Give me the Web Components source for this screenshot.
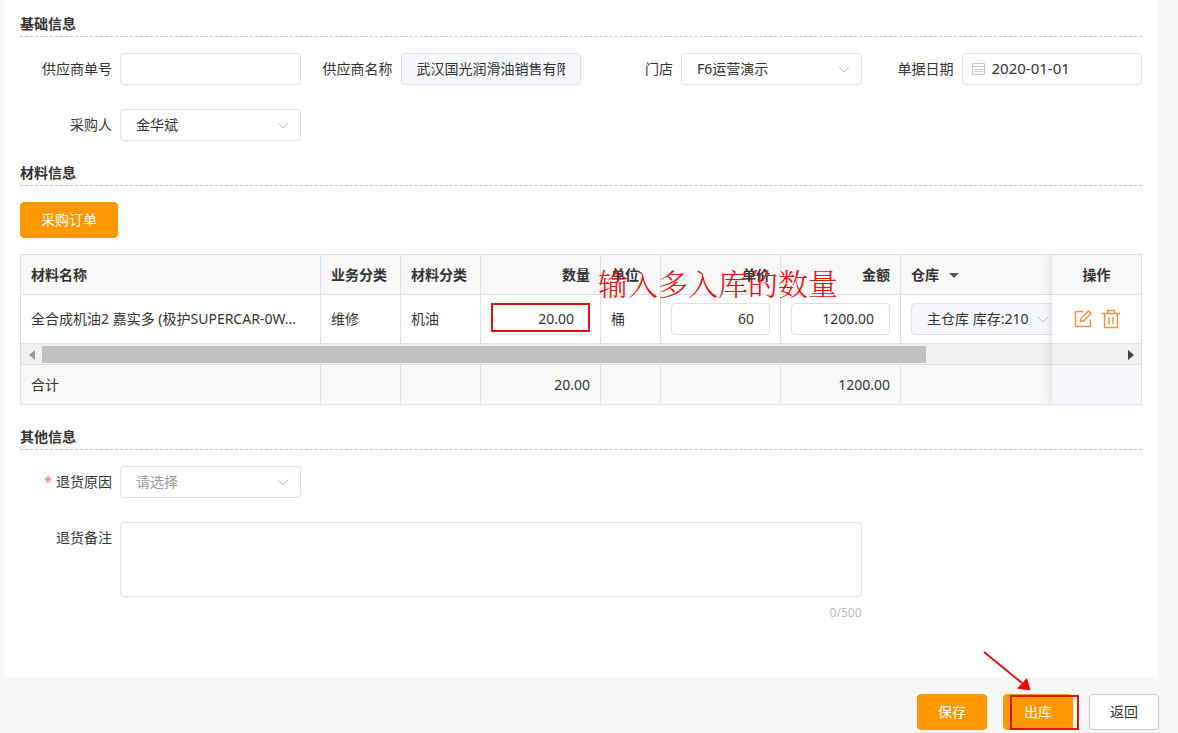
<!DOCTYPE html>
<html lang="zh-CN">
<head>
<meta charset="utf-8">
<meta name="viewport" content="width=device-width, initial-scale=1">
<title>采购退货单</title>
<style>
  body {
    margin: 0;
    background: #f7f7f7;
    color: #333;
    font: 14px/20px "Noto Sans", "Noto Sans CJK SC", sans-serif;
  }
</style>
</head>
<body>
<return-order-page></return-order-page>

<script>
const define = (name, html, setup) => {
  const template = document.createElement('template');
  template.innerHTML = html;
  customElements.define(name, class extends HTMLElement {
    constructor() {
      super();
      this.attachShadow({ mode: 'open' }).append(template.content.cloneNode(true));
    }
    connectedCallback() {
      if (setup && !this.ready) { this.ready = true; setup(this, this.shadowRoot); }
    }
  });
};

/* Bordered control: text box, drop-down, date box or text area, with an optional label. */
define('order-field', `
<style>
  :host { display: flex; align-items: flex-start; min-width: 0; }
  label { flex: none; box-sizing: border-box; width: 100px; padding-right: 8px; line-height: 32px; text-align: right; }
  label:empty { display: none; }
  :host([required]) label::before { content: "*"; color: #f56c6c; margin-right: 4px; }
  .box { position: relative; flex: 1; min-width: 0; }
  input, select, textarea {
    display: block; box-sizing: border-box; width: 100%; height: 32px; margin: 0; padding: 0 15px;
    border: 1px solid #dcdfe6; border-radius: 4px; background: #fff; color: #333;
    font: inherit; outline: none; appearance: none; resize: none;
  }
  input { padding-bottom: 2px; }
  input:disabled, select:disabled { background: #f5f7fa; opacity: 1; }
  select.empty { color: #999; }
  textarea { height: 75px; padding: 5px 15px; }
  :host([align=right]) input { text-align: right; }
  :host([kind=date]) input { padding-left: 29px; font-size: 15px; }
  svg { position: absolute; pointer-events: none; fill: none; stroke: #c0c4cc; }
  .chevron { right: 12px; top: 13px; }
  .calendar { left: 10px; top: 9px; }
  .count { display: block; margin-top: 6px; text-align: right; color: #bbb; font-size: 12px; line-height: 20px; }
</style>
<label for="control"></label><div class="box"></div>`, (host, root) => {
  const label = host.getAttribute('label');
  const kind = host.getAttribute('kind') || 'text';
  const value = host.getAttribute('value') || '';
  const box = root.querySelector('.box');
  root.querySelector('label').textContent = label || '';
  const control = document.createElement(kind === 'select' ? 'select' : kind === 'area' ? 'textarea' : 'input');
  control.id = 'control';
  if (!label) control.setAttribute('aria-label', host.getAttribute('name') || '');
  control.disabled = host.hasAttribute('disabled');
  control.required = host.hasAttribute('required');
  box.append(control);
  if (kind === 'select') {
    control.add(new Option(value || host.getAttribute('placeholder'), value));
    control.classList.toggle('empty', !value);
    box.insertAdjacentHTML('beforeend', '<svg class="chevron" width="12" height="7" viewBox="0 0 12 7"><path d="M.8.8 6 6 11.2.8"/></svg>');
  } else {
    control.value = value;
  }
  if (kind === 'date') {
    box.insertAdjacentHTML('beforeend', '<svg class="calendar" width="14" height="14" viewBox="0 0 14 14"><path d="M.5 1.500h12v11h-12zM.5 4.500h12M3 7.500h7M3 9.500h7"/></svg>');
  }
  if (kind === 'area') {
    control.maxLength = 500;
    const count = document.createElement('span');
    count.className = 'count';
    const update = () => { count.textContent = control.value.length + '/500'; };
    control.addEventListener('input', update);
    update();
    box.append(count);
  }
});

define('order-button', `
<style>
  :host { display: inline-block; }
  button {
    display: block; box-sizing: border-box; height: 36px; padding: 0 20px; border: 1px solid #ff9800;
    border-radius: 4px; background: #ff9800; color: #fff; font: inherit; cursor: pointer;
  }
  :host([plain]) button { background: #fff; border-color: #ccc; color: #333; }
</style>
<button type="button"><slot></slot></button>`);

define('order-section', `
<style>
  :host { display: block; }
  h2 { margin: 0 0 16px; padding-bottom: 2px; border-bottom: 1px dashed #c4c4c4; font-size: 14px; line-height: 20px; font-weight: 700; }
</style>
<h2></h2><slot></slot>`, (host, root) => {
  root.querySelector('h2').textContent = host.getAttribute('heading');
});

define('order-form', `
<style>
  :host { display: grid; grid-template-columns: repeat(4, minmax(0, 1fr)); row-gap: 24px; }
  ::slotted([wide]) { grid-column: 1 / span 3; }
</style>
<slot></slot>`);

/* Red hand-drawn frame that lies over whatever is slotted in. */
define('mark-frame', `
<style>
  :host { display: block; position: relative; }
  .frame { position: absolute; inset: var(--frame-inset, 0); border: 2px solid #dc1414; pointer-events: none; }
  svg { position: absolute; left: -20px; top: -43px; pointer-events: none; display: none; }
  :host([arrow]) svg { display: block; }
</style>
<slot></slot><div class="frame"></div>
<svg width="48" height="40" viewBox="0 0 48 40"><path d="M1 1 39 32" stroke="#dc1414" stroke-width="2"/><path d="m47.500 39.500-13.500-2 10-10.500z" fill="#f00000"/></svg>`);

define('material-table', `
<style>
  :host { display: block; position: relative; overflow: hidden; }
  :host::after {
    content: ""; position: absolute; top: 0; right: 0; bottom: 0; width: 90px;
    box-shadow: 0 0 10px rgba(0, 0, 0, .14); clip-path: inset(0 0 0 -10px); pointer-events: none;
  }
  table { width: 100%; table-layout: fixed; border-collapse: separate; border-spacing: 0; border: solid #dcdfe6; border-width: 1px 0 0 1px; }
  th, td { box-sizing: border-box; height: 40px; padding: 0 10px; border: solid #dcdfe6; border-width: 0 1px 1px 0; text-align: left; white-space: nowrap; }
  th, tfoot td { background: #f8f8f9; }
  tbody td { height: 49px; background: #fff; }
  .num { text-align: right; }
  .stock { overflow: hidden; border-right-width: 0; }
  .stock order-field { width: 150px; }
  .ops { text-align: center; }
  tfoot .ops { background: #f5f7fa; }
  .note-cell { position: relative; }
  .note { position: absolute; left: -3px; top: 12px; z-index: 2; color: #dc1414; font-size: 30px; line-height: 30px; font-weight: 300; font-family: "Noto Serif CJK SC", "Noto Sans CJK SC", serif; pointer-events: none; }
  mark-frame { --frame-inset: 0 0 3px 0; }
  .caret { display: inline-block; margin-left: 6px; border: 5px solid transparent; border-top-color: #555; border-bottom: 0; vertical-align: middle; }
  .actions { display: flex; justify-content: center; gap: 8px; }
  .actions button { padding: 0; border: 0; background: none; cursor: pointer; }
  .actions svg { display: block; fill: none; stroke: #ee9149; stroke-width: 1.5; }
  tr.scroll td { height: 21px; padding: 0; background: #f0f0f0; vertical-align: top; }
  .bar { display: flex; height: 17px; margin-top: 2px; }
  .bar button { flex: none; width: 21px; padding: 0; border: 0; background: none; display: flex; align-items: center; justify-content: center; }
  .track { flex: 1; }
  .thumb { width: 82%; height: 100%; background: #c1c1c1; }
</style>
<table>
  <colgroup>
    <col style="width:300px"><col style="width:80px"><col style="width:80px"><col style="width:120px"><col style="width:60px"><col style="width:120px"><col style="width:120px"><col><col style="width:90px">
  </colgroup>
  <thead>
    <tr>
      <th>材料名称</th><th>业务分类</th><th>材料分类</th><th class="num">数量</th>
      <th class="note-cell">单位<span class="note">输入多入库的数量</span></th>
      <th class="num">单价</th><th class="num">金额</th>
      <th class="stock">仓库 <span class="caret"></span></th><th class="ops">操作</th>
    </tr>
  </thead>
  <tbody>
    <tr>
      <td>全合成机油2 嘉实多 (极护SUPERCAR-0W...</td><td>维修</td><td>机油</td>
      <td><mark-frame><order-field name="数量" value="20.00" align="right"></order-field></mark-frame></td>
      <td>桶</td>
      <td><order-field name="单价" value="60" align="right"></order-field></td>
      <td><order-field name="金额" value="1200.00" align="right"></order-field></td>
      <td class="stock"><order-field name="仓库" kind="select" value="主仓库 库存:210" disabled></order-field></td>
      <td class="ops"><div class="actions">
        <button type="button" aria-label="编辑"><svg width="20" height="20" viewBox="0 0 20 20"><path d="M10 2.500H2.500v15h15v-7M7.500 12.500l.5-3 7.500-7.500 2.500 2.500-7.500 7.500z"/></svg></button>
        <button type="button" aria-label="删除"><svg width="20" height="20" viewBox="0 0 20 20"><path d="M1 4.500h18M3.500 4.500v14h13v-14M6.500 4.500v-3h7v3M8 8v7M12 8v7"/></svg></button>
      </div></td>
    </tr>
    <tr class="scroll">
      <td colspan="9"><div class="bar">
        <button type="button" aria-label="向左滚动"><svg width="6" height="10" viewBox="0 0 6 10"><path d="M6 0v10L0 5z" fill="#999"/></svg></button>
        <div class="track"><div class="thumb"></div></div>
        <button type="button" aria-label="向右滚动"><svg width="6" height="10" viewBox="0 0 6 10"><path d="M0 0v10l6-5z" fill="#444"/></svg></button>
      </div></td>
    </tr>
  </tbody>
  <tfoot>
    <tr><td>合计</td><td></td><td></td><td class="num">20.00</td><td></td><td></td><td class="num">1200.00</td><td class="stock"></td><td class="ops"></td></tr>
  </tfoot>
</table>`);

define('return-order-page', `
<style>
  :host { display: block; }
  main { display: flex; flex-direction: column; gap: 22px; margin: 0 20px 0 4px; padding: 14px 16px 54px; background: #fff; }
  material-table { margin-top: 16px; }
  order-button { vertical-align: top; }
  footer { display: flex; justify-content: flex-end; gap: 16px; padding: 17px 19px 3px 0; }
  mark-frame { --frame-inset: 1px -6px 0 7px; }
</style>
<main>
  <order-section heading="基础信息">
    <order-form>
      <order-field label="供应商单号"></order-field>
      <order-field label="供应商名称" value="武汉国光润滑油销售有限" disabled></order-field>
      <order-field label="门店" kind="select" value="F6运营演示"></order-field>
      <order-field label="单据日期" kind="date" value="2020-01-01"></order-field>
      <order-field label="采购人" kind="select" value="金华斌"></order-field>
    </order-form>
  </order-section>
  <order-section heading="材料信息">
    <order-button>采购订单</order-button>
    <material-table></material-table>
  </order-section>
  <order-section heading="其他信息">
    <order-form>
      <order-field label="退货原因" kind="select" placeholder="请选择" required></order-field>
      <order-field label="退货备注" kind="area" wide></order-field>
    </order-form>
  </order-section>
</main>
<footer>
  <order-button>保存</order-button>
  <mark-frame arrow><order-button>出库</order-button></mark-frame>
  <order-button plain>返回</order-button>
</footer>`);
</script>
</body>
</html>
